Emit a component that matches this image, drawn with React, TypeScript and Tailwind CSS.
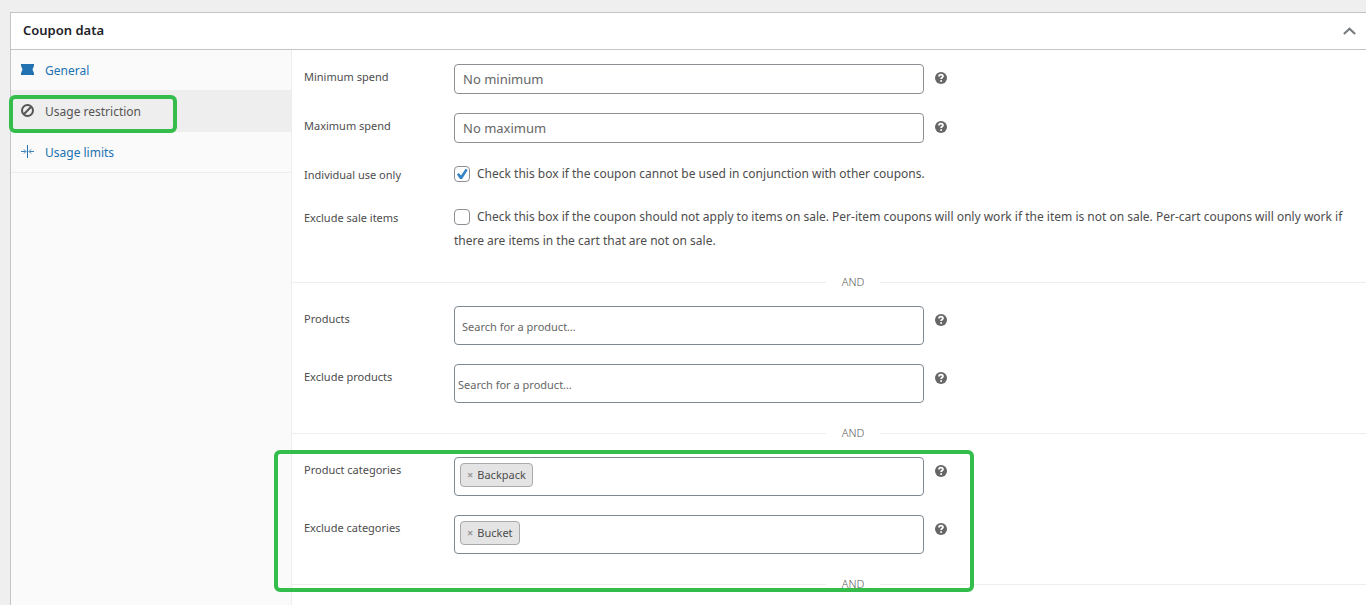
import type { ReactNode } from 'react';

type Tab = {
  label: string;
  icon: ReactNode;
  active?: boolean;
};

function TicketIcon() {
  return (
    <svg viewBox="0 0 13 11" className="h-[11px] w-[13px]" fill="currentColor" aria-hidden>
      <path d="M0 0h13v2.300a1.500 1.500 0 0 0-.8 1.400c0 1.200-.8 1.200-.8 1.800s.8.600.8 1.800c0 .7.300 1.200.8 1.400V11H0V8.700c.5-.2.800-.7.800-1.400 0-1.200.8-1.200.8-1.800s-.8-.6-.8-1.800c0-.7-.3-1.200-.8-1.400z" />
    </svg>
  );
}

function BlockIcon() {
  return (
    <svg viewBox="0 0 13 13" className="size-[13px]" fill="none" stroke="currentColor" strokeWidth="2" aria-hidden>
      <circle cx="6.500" cy="6.500" r="5.500" />
      <path d="M2.800 10.200l7.400-7.400" />
    </svg>
  );
}

function LimitsIcon() {
  return (
    <svg viewBox="0 0 13 13" className="size-[13px]" fill="none" stroke="currentColor" aria-hidden>
      <path d="M6.500 0v13" strokeWidth="1" />
      <path d="M0 6.500h4.500M13 6.500H8.500" strokeWidth="0.900" />
      <path d="M3 4.500l2 2-2 2M10 4.500l-2 2 2 2" strokeWidth="0.900" />
    </svg>
  );
}

function HelpTip() {
  return (
    <button type="button" aria-label="Help" className="flex h-[27px] items-center text-[#666]">
      <svg viewBox="0 0 12 12" className="size-3" aria-hidden>
        <circle cx="6" cy="6" r="6" fill="currentColor" />
        <path
          d="M4 4.500c0-2.500 4-2.500 4-.2 0 1.300-1.900 1.200-1.900 2.700"
          fill="none"
          stroke="#fff"
          strokeWidth="1.800"
        />
        <circle cx="6.100" cy="9" r="1" fill="#fff" />
      </svg>
    </button>
  );
}

const tabs: Tab[] = [
  { label: 'General', icon: <TicketIcon /> },
  { label: 'Usage restriction', icon: <BlockIcon />, active: true },
  { label: 'Usage limits', icon: <LimitsIcon /> },
];

function Highlight({ className }: { className: string }) {
  return (
    <div
      aria-hidden
      className={`pointer-events-none absolute z-10 rounded-md border-4 border-[#34bd4b] ${className}`}
    />
  );
}

function Row({ id, label, children }: { id: string; label: string; children: ReactNode }) {
  return (
    <div className="flex items-start pl-3">
      <label htmlFor={id} className="w-[150px] shrink-0 text-[11px] leading-[26px]">
        {label}
      </label>
      {children}
    </div>
  );
}

function TextField({ id, label, placeholder }: { id: string; label: string; placeholder: string }) {
  return (
    <Row id={id} label={label}>
      <div className="flex flex-1 gap-[11px]">
        <input
          id={id}
          type="text"
          placeholder={placeholder}
          className="h-[30px] w-[470px] rounded border border-[#8c8f94] bg-white px-2 text-[13px] placeholder:text-[#666]"
        />
        <HelpTip />
      </div>
    </Row>
  );
}

function SearchField({ id, label, inset }: { id: string; label: string; inset: string }) {
  return (
    <Row id={id} label={label}>
      <div className="flex flex-1 gap-[11px]">
        <input
          id={id}
          type="search"
          placeholder="Search for a product…"
          className={`h-[39px] w-[470px] rounded border border-[#7e8993] bg-white pt-0.5 text-[11px] placeholder:text-[#666] ${inset}`}
        />
        <HelpTip />
      </div>
    </Row>
  );
}

function TagField({ id, label, tag }: { id: string; label: string; tag: string }) {
  return (
    <Row id={id} label={label}>
      <div className="flex flex-1 gap-[11px]">
        <div className="flex h-[39px] w-[470px] items-start rounded border border-[#7e8993] bg-white p-[5px]">
          <span className="flex h-6 items-center gap-1 rounded border border-[#aaa] bg-[#e4e4e4] px-1.5 text-[11px]">
            <button type="button" aria-label={`Remove ${tag}`} className="font-bold text-[#999]">
              ×
            </button>
            {tag}
          </span>
          <input id={id} type="text" className="min-w-0 flex-1 outline-none" />
        </div>
        <HelpTip />
      </div>
    </Row>
  );
}

function CheckField({
  id,
  label,
  checked,
  children,
}: {
  id: string;
  label: string;
  checked?: boolean;
  children: ReactNode;
}) {
  return (
    <Row id={id} label={label}>
      <p className="flex-1 text-xs leading-6">
        <span className="mr-[7px] inline-flex h-6 items-center align-top">
          <span className="relative size-4">
            <input
              id={id}
              type="checkbox"
              defaultChecked={checked}
              className="peer block size-4 appearance-none rounded border border-[#8c8f94] bg-white"
            />
            <svg
              viewBox="0 0 16 16"
              className="pointer-events-none absolute inset-0 hidden size-4 peer-checked:block"
              fill="#3582c4"
              aria-hidden
            >
              <path d="M11.600 2.800l2.100 1.100-5.600 9H6L2.900 8.400l1.900-1.300 2.200 2.400z" />
            </svg>
          </span>
        </span>
        {children}
      </p>
    </Row>
  );
}

function Divider() {
  return (
    <div className="-mr-12 flex h-6 items-center gap-4 text-[11px] font-light text-[#555]">
      <span className="h-px flex-1 bg-[#eee]" />
      AND
      <span className="h-px flex-1 bg-[#eee]" />
    </div>
  );
}

export default function App() {
  return (
    <main className="h-screen overflow-hidden bg-[#efefef] pt-3 pl-2.5 font-['Noto_Sans',sans-serif] text-[#4d4d4d]">
      <section className="flex h-full flex-col border-t border-l border-[#c3c4c7] bg-white">
        <header className="flex h-[37px] shrink-0 items-center justify-between border-b border-[#c3c4c7] pr-2.5 pl-3">
          <h2 className="text-[13px] font-semibold text-[#1d2327]">Coupon data</h2>
          <button type="button" aria-label="Toggle panel: Coupon data" className="text-[#787c82]">
            <svg viewBox="0 0 13 8" className="h-2 w-[13px]" fill="none" stroke="currentColor" strokeWidth="2.200" aria-hidden>
              <path d="M.9 7l5.600-5.300L12.100 7" />
            </svg>
          </button>
        </header>

        <div className="flex min-h-0 flex-1">
          <nav className="w-[281px] shrink-0 border-r border-[#eee] bg-[#fafafa]">
            <ul>
              {tabs.map((tab) => (
                <li key={tab.label} className="relative">
                  <a
                    href="#"
                    className={`flex h-[41px] items-start gap-[11px] border-b border-[#eee] pl-2.5 text-xs ${
                      tab.active ? 'bg-[#eee] text-[#555]' : 'text-[#2271b1]'
                    }`}
                  >
                    <span className="flex h-[39px] items-center">{tab.icon}</span>
                    <span className="leading-[42px]">{tab.label}</span>
                  </a>
                  {tab.active && <Highlight className="top-1 -left-0.5 h-[38px] w-[168px]" />}
                </li>
              ))}
            </ul>
          </nav>

          <form className="min-w-0 flex-1">
            <div className="flex flex-col gap-[19px] pt-3.5 pb-[17px]">
              <TextField id="minimum" label="Minimum spend" placeholder="No minimum" />
              <TextField id="maximum" label="Maximum spend" placeholder="No maximum" />
              <div className="flex flex-col gap-[17px]">
                <CheckField id="individual" label="Individual use only" checked>
                  Check this box if the coupon cannot be used in conjunction with other coupons.
                </CheckField>
                <CheckField id="sale" label="Exclude sale items">
                  Check this box if the coupon should not apply to items on sale. Per-item coupons will only work if
                  the item is not on sale. Per-cart coupons will only work if there are items in the cart that are not
                  on sale.
                </CheckField>
              </div>
            </div>

            <Divider />

            <div className="flex flex-col gap-[19px] pt-3 pb-[18px]">
              <SearchField id="products" label="Products" inset="px-[7px]" />
              <SearchField id="exclude-products" label="Exclude products" inset="px-[3px]" />
            </div>

            <Divider />

            <div className="relative flex flex-col gap-[19px] pt-3 pb-[18px]">
              <TagField id="categories" label="Product categories" tag="Backpack" />
              <TagField id="exclude-categories" label="Exclude categories" tag="Bucket" />
              <Highlight className="top-[5px] -left-[18px] h-[142px] w-[700px]" />
            </div>

            <Divider />
          </form>
        </div>
      </section>
    </main>
  );
}
